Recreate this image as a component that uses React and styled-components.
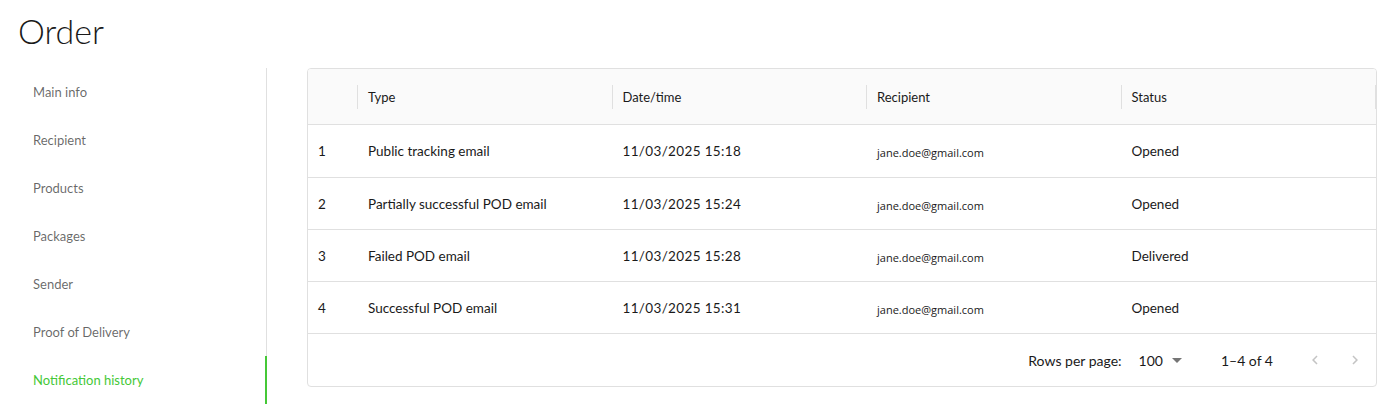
import React from 'react';
import styled, {createGlobalStyle} from 'styled-components';

const GlobalStyle = createGlobalStyle`
    *, *::before, *::after {
        box-sizing: border-box;
    }

    body {
        margin: 0;
        background: #ffffff;
        font-family: Lato, "Open Sans", sans-serif;
        color: rgba(0, 0, 0, 0.87);
    }
`;

const Page = styled.div`
    padding: 11px 16px 0 17px;
`;

const Title = styled.h1`
    margin: 0 0 17px 1px;
    font-size: 34px;
    line-height: 40px;
    font-weight: 300;
    color: #1a1a1a;
`;

const Body = styled.div`
    display: flex;
    align-items: flex-start;
    gap: 40px;
`;

const Sidebar = styled.nav`
    width: 250px;
    flex-shrink: 0;
    display: flex;
    flex-direction: column;
    border-right: 1px solid #e0e0e0;
`;

const Tab = styled.div`
    position: relative;
    height: 48px;
    display: flex;
    align-items: center;
    padding: 0 16px;
    font-size: 13px;
    color: ${props => props.active ? '#45c837' : 'rgba(0, 0, 0, 0.6)'};

    &::after {
        content: '';
        display: ${props => props.active ? 'block' : 'none'};
        position: absolute;
        right: -1px;
        top: 0;
        bottom: 0;
        width: 2px;
        background: #45c837;
    }
`;

const Card = styled.div`
    flex: 1;
    border: 1px solid #e0e0e0;
    border-radius: 4px;
    overflow: hidden;
`;

const Grid = styled.div`
    display: grid;
    grid-template-columns: 50px repeat(4, 1fr);
`;

const HeadCell = styled.div`
    position: relative;
    height: 56px;
    display: flex;
    align-items: center;
    padding: 0 10px;
    background: #fafafa;
    border-bottom: 1px solid #e0e0e0;
    font-size: 13px;
    color: #1a1a1a;

    &::after {
        content: '';
        position: absolute;
        right: 0;
        top: 16px;
        height: 24px;
        width: 1px;
        background: #e0e0e0;
    }
`;

const Cell = styled.div`
    height: ${props => props.first ? '53px' : '52px'};
    display: flex;
    align-items: center;
    padding: ${props => props.mono ? '3px 10px 0' : '0 10px'};
    border-bottom: 1px solid #e0e0e0;
    font-size: ${props => props.mono ? '11px' : '13.5px'};
    font-family: ${props => props.mono ? '"Open Sans", sans-serif' : 'inherit'};
    letter-spacing: ${props => props.wide ? '0.35px' : '0'};
    color: #1a1a1a;
`;

const Footer = styled.div`
    height: 52px;
    display: flex;
    align-items: center;
    justify-content: flex-end;
    padding-right: 1px;
    font-size: 14px;
    color: #1a1a1a;
`;

const RowsLabel = styled.span`
    margin-right: 17px;
`;

const Select = styled.div`
    display: flex;
    align-items: center;
    gap: 9px;
    margin-right: 39px;
`;

const Caret = styled.span`
    width: 0;
    height: 0;
    border-left: 5px solid transparent;
    border-right: 5px solid transparent;
    border-top: 5px solid #757575;
`;

const Range = styled.span`
    margin-right: 22px;
`;

const PageButton = styled.button`
    width: 40px;
    height: 40px;
    display: flex;
    align-items: center;
    justify-content: center;
    padding: 0;
    border: none;
    background: none;
    color: #c4c4c4;
`;

const Chevron = ({dir}) => (
    <svg width="18" height="18" viewBox="0 0 24 24" fill="currentColor">
        {dir === 'left'
            ? <path d="M15.41 7.41 14 6l-6 6 6 6 1.41-1.41L10.83 12z"/>
            : <path d="M10 6 8.59 7.41 13.17 12l-4.58 4.59L10 18l6-6z"/>}
    </svg>
);

const tabs = ['Main info', 'Recipient', 'Products', 'Packages', 'Sender', 'Proof of Delivery', 'Notification history'];

const rows = [
    {id: 1, type: 'Public tracking email', date: '11/03/2025 15:18', email: 'jane.doe@gmail.com', status: 'Opened'},
    {id: 2, type: 'Partially successful POD email', date: '11/03/2025 15:24', email: 'jane.doe@gmail.com', status: 'Opened'},
    {id: 3, type: 'Failed POD email', date: '11/03/2025 15:28', email: 'jane.doe@gmail.com', status: 'Delivered'},
    {id: 4, type: 'Successful POD email', date: '11/03/2025 15:31', email: 'jane.doe@gmail.com', status: 'Opened'},
];

export default function App() {
    return (
        <Page>
            <GlobalStyle/>
            <Title>Order</Title>
            <Body>
                <Sidebar>
                    {tabs.map(t => (
                        <Tab key={t} active={t === 'Notification history'}>{t}</Tab>
                    ))}
                </Sidebar>
                <Card>
                    <Grid>
                        <HeadCell/>
                        <HeadCell>Type</HeadCell>
                        <HeadCell>Date/time</HeadCell>
                        <HeadCell>Recipient</HeadCell>
                        <HeadCell>Status</HeadCell>
                        {rows.map((r, i) => (
                            <React.Fragment key={r.id}>
                                <Cell first={i === 0}>{r.id}</Cell>
                                <Cell first={i === 0}>{r.type}</Cell>
                                <Cell first={i === 0} wide>{r.date}</Cell>
                                <Cell first={i === 0} mono>{r.email}</Cell>
                                <Cell first={i === 0}>{r.status}</Cell>
                            </React.Fragment>
                        ))}
                    </Grid>
                    <Footer>
                        <RowsLabel>Rows per page:</RowsLabel>
                        <Select>100 <Caret/></Select>
                        <Range>1–4 of 4</Range>
                        <PageButton><Chevron dir="left"/></PageButton>
                        <PageButton><Chevron dir="right"/></PageButton>
                    </Footer>
                </Card>
            </Body>
        </Page>
    );
}
